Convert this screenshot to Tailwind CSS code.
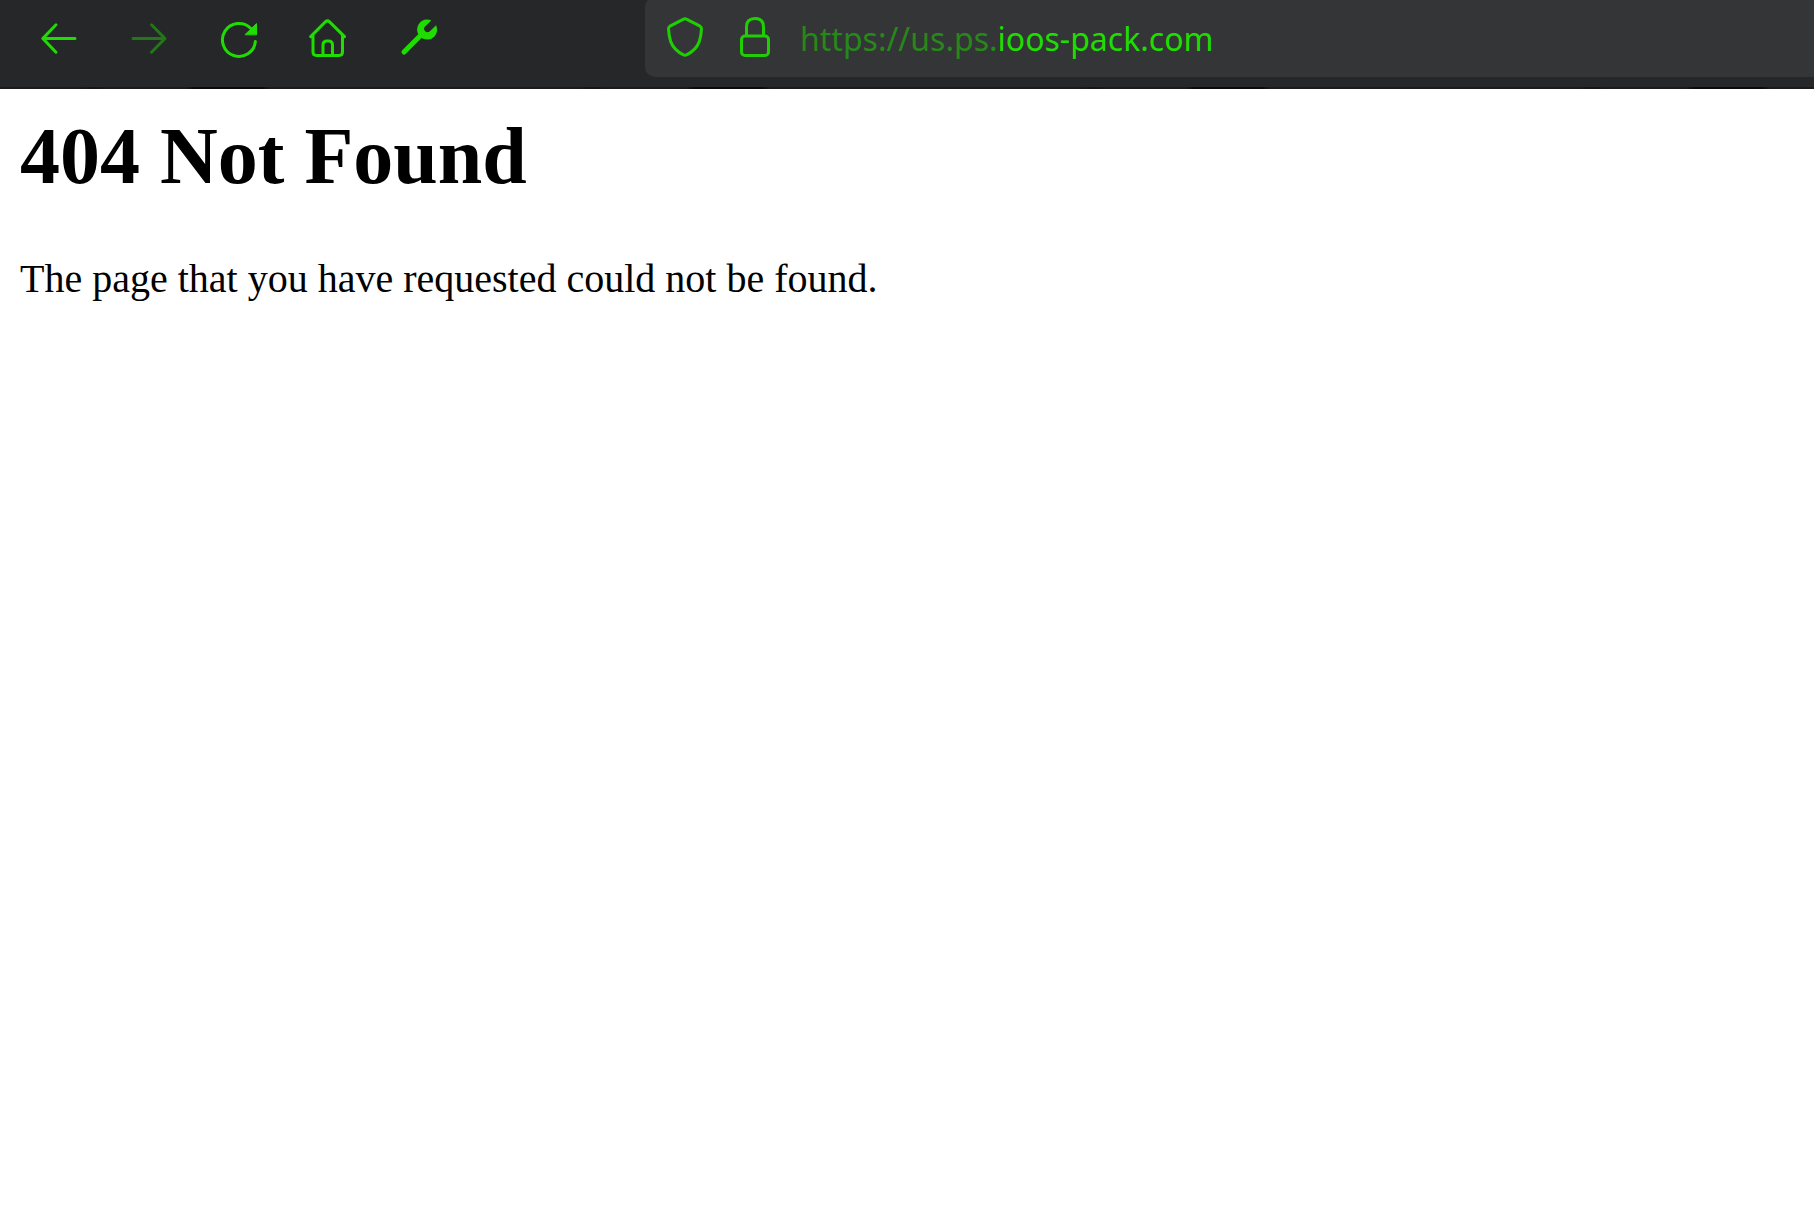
<!DOCTYPE html>
<html lang="en">
<head>
<meta charset="utf-8">
<meta name="viewport" content="width=device-width, initial-scale=1">
<title>404 Not Found</title>
<script src="https://cdn.jsdelivr.net/npm/@tailwindcss/browser@4"></script>
</head>
<body class="min-h-screen overflow-x-hidden bg-white text-black">
<header class="bg-[#252729] text-[#1fdd00]">
  <div class="flex items-start pb-[10px]">
    <nav aria-label="Browser controls" class="flex h-[76px] w-[645px] shrink-0 items-center pl-[14px]">
      <button type="button" aria-label="Back" class="flex w-[90px] justify-center">
        <svg class="size-10" viewBox="0 0 40 40" fill="none" stroke="currentColor" stroke-width="3" stroke-linecap="round" stroke-linejoin="round"><path d="M36 20.5H4.5M17 6.8L3.8 20.5L17 34.2"/></svg>
      </button>
      <button type="button" aria-label="Forward" disabled class="flex w-[90px] justify-center text-[#237716]">
        <svg class="size-10" viewBox="0 0 40 40" fill="none" stroke="currentColor" stroke-width="3" stroke-linecap="round" stroke-linejoin="round"><path d="M4 20.5H36M22.5 6.8L36 20.5L22.5 34.2"/></svg>
      </button>
      <button type="button" aria-label="Reload" class="flex w-[90px] justify-center">
        <svg class="size-10" viewBox="0 0 40 40" fill="none" stroke="currentColor" stroke-width="3" stroke-linecap="round" stroke-linejoin="round"><path d="M36.4 23.5A16.5 16.5 0 1 1 31.7 10.3L33 11.6"/><path d="M26.2 16.5L37.5 5.6V16.5Z" fill="currentColor" stroke-width="1"/></svg>
      </button>
      <button type="button" aria-label="Home" class="flex w-[90px] justify-center">
        <svg class="size-10" viewBox="0 0 40 40" fill="none" stroke="currentColor" stroke-width="3" stroke-linecap="round" stroke-linejoin="round"><path d="M1.7 18.6L16.4 3.8Q18.5 1.8 20.6 3.8L35.5 18.6M4 17V34Q4 37.4 7.4 37.4H30.1Q33.5 37.4 33.5 34V17M14 37V27Q14 23 18 23H19.5Q23.5 23 23.5 27V37"/></svg>
      </button>
      <button type="button" aria-label="Tools" class="flex w-[90px] justify-center">
        <svg class="size-10" viewBox="0 0 40 40" fill="currentColor"><path d="M32.3 2.5A10 10 0 1 0 37.1 7.2L30.6 13.5A3.4 3.4 0 0 1 25.8 8.8Z"/><path d="M5 34L21 18" stroke="currentColor" stroke-width="5" stroke-linecap="round"/></svg>
      </button>
    </nav>
    <div class="-mt-[3px] flex h-[80px] min-w-0 grow items-center rounded-l-[10px] bg-[#333537] pl-5">
      <button type="button" aria-label="Tracking protection" class="mr-[30px] shrink-0 text-[#1fcf04]">
        <svg class="size-10" viewBox="0 0 40 40" fill="none" stroke="currentColor" stroke-width="3" stroke-linejoin="round"><path d="M18.6 2.1Q20 1.3 21.4 2.1L35 9.2Q36.6 10.1 36.5 11.9Q36.1 19 34.3 24.6Q31 33.2 21.6 37.8Q20 38.7 18.4 37.8Q9 33.2 5.7 24.6Q3.9 19 3.5 11.9Q3.4 10.1 5 9.2Z"/></svg>
      </button>
      <button type="button" aria-label="Site information" class="mr-[25px] shrink-0 text-[#1fcf04]">
        <svg class="size-10" viewBox="0 0 40 40" fill="none" stroke="currentColor" stroke-width="3"><rect x="6.5" y="19" width="27" height="19.5" rx="3.5"/><path d="M11.5 19V10Q11.5 1.5 20 1.5T28.5 10V19"/></svg>
      </button>
      <div class="flex min-w-0 grow items-center pt-1 font-['Noto_Sans',sans-serif] text-[32px] leading-[46px]">
        <label for="address" class="shrink-0 text-[#28871a]">https://us.ps.</label>
        <input id="address" type="text" value="ioos-pack.com" spellcheck="false" class="min-w-0 grow bg-transparent p-0 outline-none">
      </div>
    </div>
  </div>
  <!-- edge of the toolbar, with its repeating darker dashes -->
  <div class="h-[2px] bg-[repeating-linear-gradient(90deg,#1b1b1b_0px,#1b1b1b_78px,#141414_94px,#1b1b1b_106px,#1b1b1b_186px,#0a0a0a_194px,#0a0a0a_262px,#1b1b1b_270px,#1b1b1b_500px)]"></div>
</header>
<main class="px-5 pt-[21px] font-['Liberation_Serif',serif]">
  <h1 class="text-[80px] leading-[92px] font-bold">404 Not Found</h1>
  <p class="mt-[54px] text-[40px] leading-[46px]">The page that you have requested could not be found.</p>
</main>
</body>
</html>
